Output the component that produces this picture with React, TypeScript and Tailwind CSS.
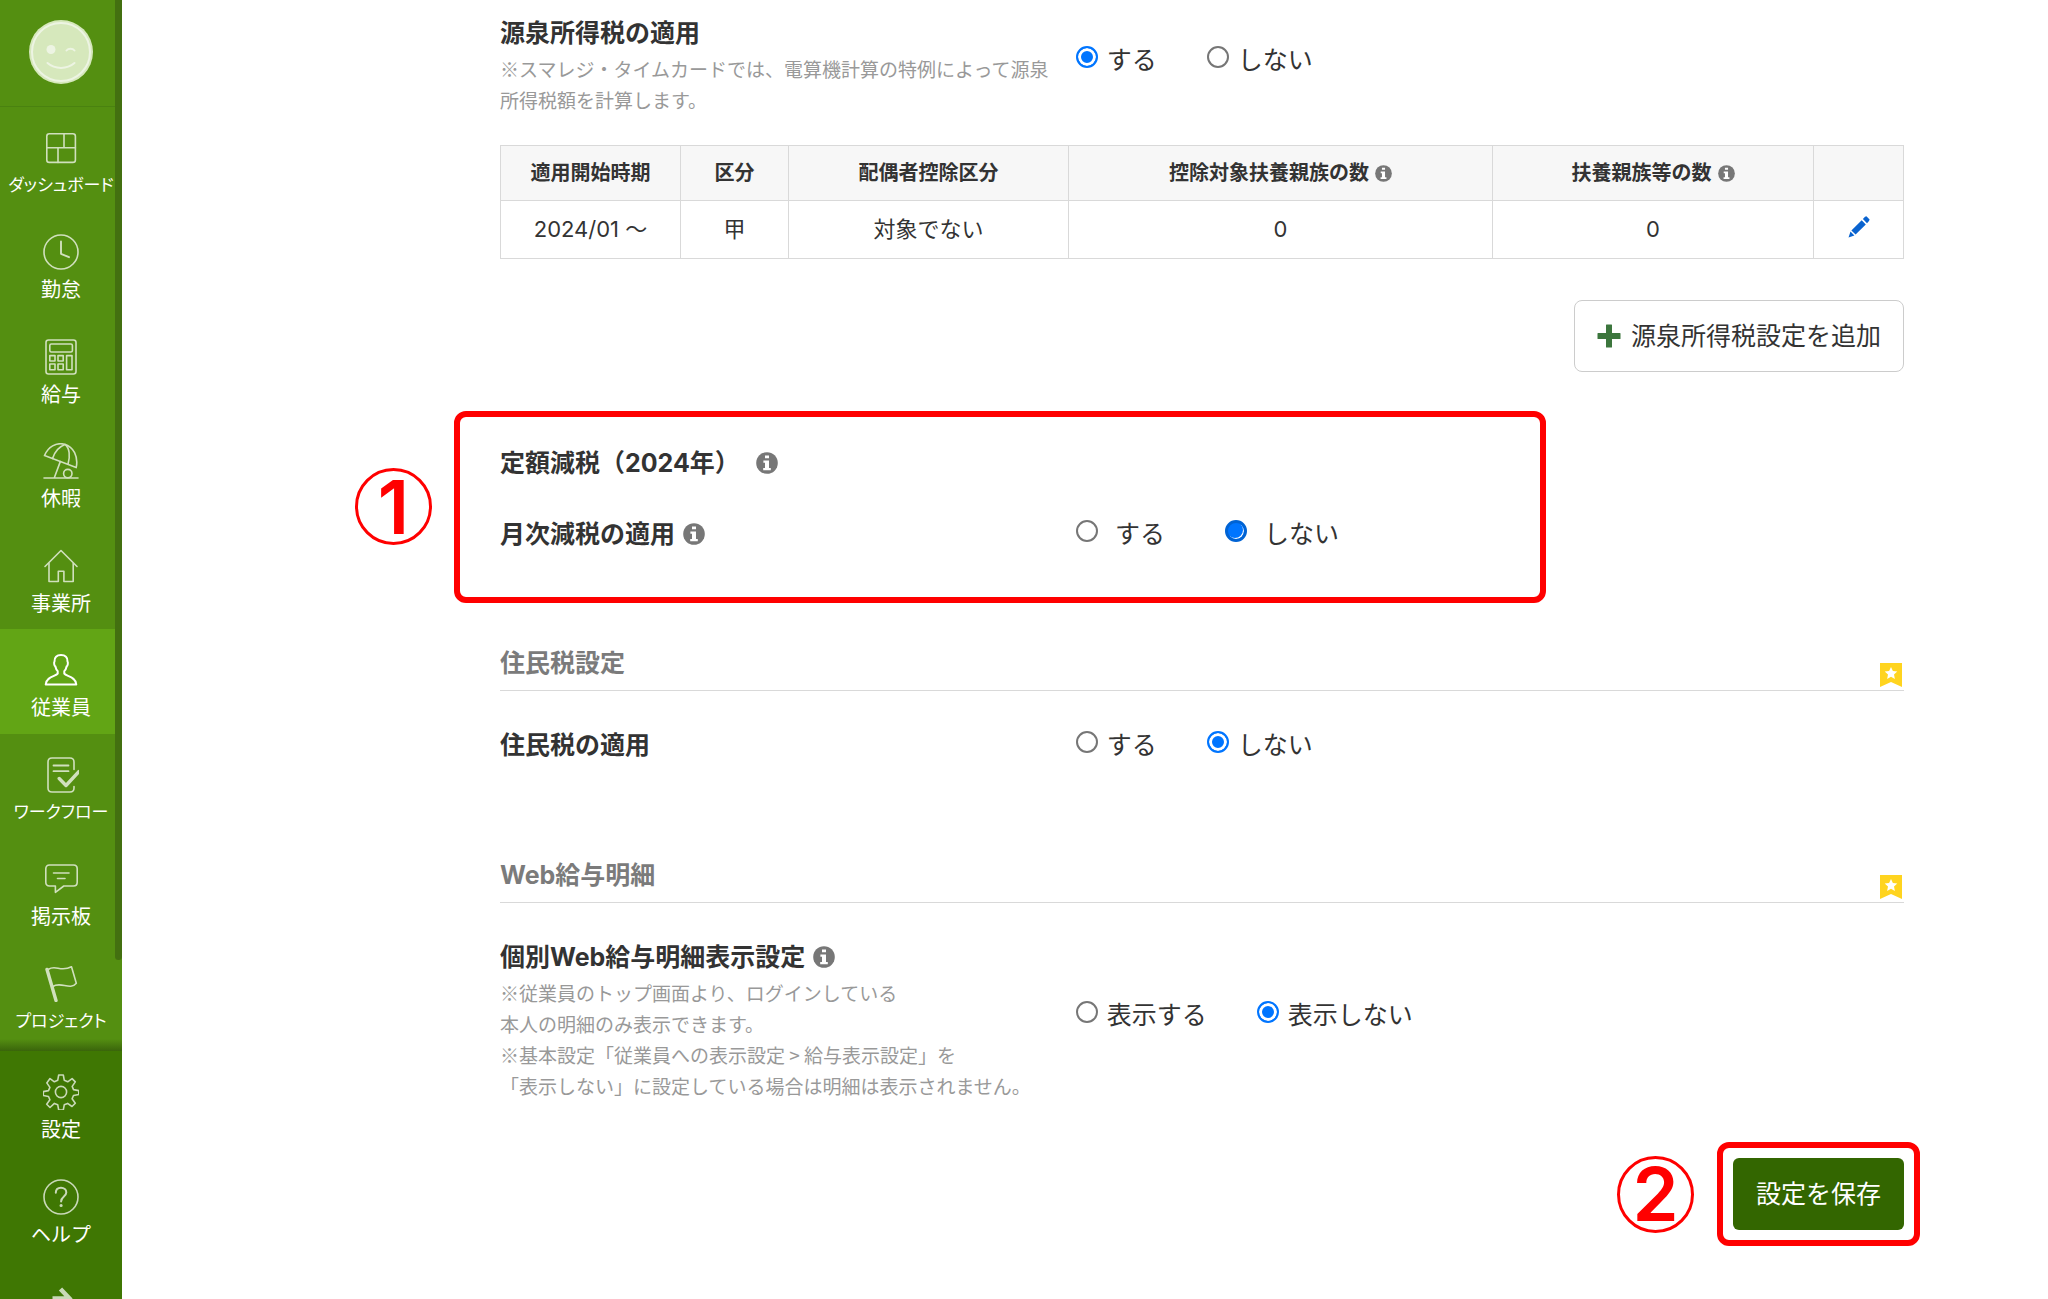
import type { ReactNode } from "react";

const iconProps = {
  viewBox: "0 0 36 36",
  fill: "none",
  stroke: "currentColor",
  strokeWidth: 1.6,
  strokeLinejoin: "round" as const,
  strokeLinecap: "round" as const,
  className: "size-9 shrink-0",
  "aria-hidden": true,
};

const DashboardIcon = () => (
  <svg {...iconProps}>
    <rect x="3.8" y="3.8" width="28.6" height="28.6" rx="2.5" />
    <path d="M3.8 17.8h28.6M21 3.8v14M15 17.8v14.6" />
  </svg>
);

const ClockIcon = () => (
  <svg {...iconProps}>
    <circle cx="18" cy="18" r="17" />
    <path d="M18 7.5v12.3l8 3.4" strokeWidth="1.9" />
  </svg>
);

const CalculatorIcon = () => (
  <svg {...iconProps}>
    <rect x="3" y="1" width="30" height="34" rx="2.5" />
    <rect x="6.8" y="5" width="22.6" height="8" rx="1.5" />
    <rect x="6.8" y="16.6" width="5.2" height="5.4" />
    <rect x="15" y="16.6" width="5.2" height="5.4" />
    <rect x="6.8" y="25" width="5.2" height="5.8" />
    <rect x="15" y="25" width="5.2" height="5.8" />
    <rect x="23.6" y="16.6" width="5.4" height="14.2" />
  </svg>
);

const UmbrellaIcon = () => (
  <svg {...iconProps}>
    <path d="M1.5 12.6C5 4 13 -.8 21.5 1.2c9 2.4 14 12.500 11.700 23.400z" />
    <path d="M9.500 15.500C11.500 9 16.500 3.500 22 1.400c4.600 3.600 5.400 11.600 3 19.800" />
    <path d="M17.300 18.600 11.300 34.800M1 35h34" />
    <circle cx="24.800" cy="30.600" r="4.200" />
  </svg>
);

const HouseIcon = () => (
  <svg {...iconProps}>
    <path d="M2 18.500 18 2.500l16 16" />
    <path d="M6 15.500V33.500h9.300V23.200h5.600v10.300H30.200V15.500" />
  </svg>
);

const PersonIcon = () => (
  <svg {...iconProps} strokeWidth={2}>
    <path d="M18 3c-4.300 0-6.800 2.300-6.500 6.500-.7.900-.4 4.300.9 5 .4 2 1.100 3.400 2.300 4.600v2.600c-2 2.600-11.700 2.800-12 10.800h30.600c-.3-8-10-8.200-12-10.800v-2.600c1.200-1.200 1.900-2.600 2.300-4.600 1.300-.7 1.600-4.100.9-5C24.800 5.300 22.300 3 18 3z" />
  </svg>
);

const WorkflowIcon = () => (
  <svg {...iconProps}>
    <path d="M31 12.500V5c0-2.500-1.500-4-4-4H9C6.500 1 5 2.500 5 5v26c0 2.500 1.500 4 4 4h18c2.500 0 4-1.500 4-4v-1.500" />
    <path d="M10.500 8.500h15M10.500 14.200h15" strokeWidth="1.800" />
    <path d="m16.200 21.500 6.800 7L36 14.500" strokeWidth="3.400" />
  </svg>
);

const BoardIcon = () => (
  <svg {...iconProps}>
    <path d="M6.500 4h24c2.400 0 3.700 1.300 3.700 3.700v13.600c0 2.400-1.300 3.700-3.700 3.700h-9.700l-8.400 6.300V25H6.500c-2.400 0-3.700-1.300-3.700-3.700V7.700C2.800 5.300 4.100 4 6.500 4z" />
    <path d="M10.500 12h15.500M14.500 17.500h7.500" />
  </svg>
);

const FlagIcon = () => (
  <svg {...iconProps}>
    <path d="M4 3.500 13 34.500" strokeWidth="3.400" />
    <path d="M5.500 3.200C13-1.500 17.500 6.500 28.500.8l4.800 16.400C27 25 18 15 9.800 20.500" />
  </svg>
);

const GearIcon = () => (
  <svg {...iconProps}>
    <circle cx="18" cy="18" r="5.600" />
    <path d="M15.700 1h4.600l1 5.300 3.400 1.500 4.400-3.200 3.200 3.300-3.100 4.500 1.300 3.200 5.300 1v3.900l-5.300 1-1.400 3.300 3.200 4.500-3.300 3.200-4.400-3.100-3.300 1.300-1 5.300h-4.600l-1-5.300-3.300-1.300L7 33.500l-3.300-3.200 3.200-4.500-1.400-3.300-5.200-1v-3.900l5.200-1 1.400-3.200-3.100-4.500L7 4.600l4.400 3.200 3.300-1.500z" />
  </svg>
);

const HelpIcon = () => (
  <svg {...iconProps}>
    <circle cx="18" cy="18" r="17" />
    <path d="M12.800 13.800c0-3.300 2.200-5 5.200-5s5.300 1.800 5.300 4.700c0 4-5.200 4.200-5.200 9" strokeWidth="2" />
    <circle cx="18.100" cy="26.500" r=".8" fill="currentColor" />
  </svg>
);

const ArrowIcon = () => (
  <svg {...iconProps}>
    <path d="M9.500 14.500H25M17.500 5l9 9.500-9 9.500" strokeWidth="4.500" strokeLinecap="butt" strokeLinejoin="miter" />
  </svg>
);

const PencilIcon = () => (
  <svg viewBox="0 0 22 22" className="size-[22px] fill-[#0a63cf]" aria-hidden="true">
    <path d="M17 .8 18.400.300 21.600 3.600 21 5 19 7.200 14.900 3zM13.700 4.200 17.800 8.400 7.600 18.600 3.400 14.400zM2.500 15.600 6.400 19.500.5 21.500z" />
  </svg>
);

const PlusIcon = () => (
  <svg viewBox="0 0 24 24" className="size-6 fill-[#3c763d]" aria-hidden="true">
    <path d="M9.500.5h5q.5 0 .5.500v8h8q.5 0 .5.500v5q0 .5-.5.500h-8v8q0 .5-.5.500h-5q-.5 0-.5-.5v-8H1q-.5 0-.5-.5v-5q0-.5.5-.5h8V1q0-.5.5-.5z" />
  </svg>
);

const BookmarkIcon = () => (
  <svg viewBox="0 0 22 24" className="h-6 w-[22px]" aria-hidden="true">
    <path d="M0 0h22v24l-11-5-11 5z" fill="#ffd41f" />
    <path d="m11 4 1.900 4.100 4.400.5-3.300 3 .9 4.400-3.900-2.200L7.100 16l.9-4.400-3.300-3 4.400-.5z" fill="#fff" />
  </svg>
);

const Info = ({ small }: { small?: boolean }) => (
  <svg viewBox="0 0 22 22" className={small ? "size-[17px]" : "size-[22px]"} aria-hidden="true">
    <circle cx="11" cy="11" r="10.800" fill="#777" />
    <path d="M9 3.400h4v2.900H9zM7.400 8.400H13v7.500h1.800v2.300H7.200v-2.300H9v-5.200H7.400z" fill="#fff" />
  </svg>
);

const menu = [
  { label: "ダッシュボード", Icon: DashboardIcon, long: true },
  { label: "勤怠", Icon: ClockIcon },
  { label: "給与", Icon: CalculatorIcon },
  { label: "休暇", Icon: UmbrellaIcon },
  { label: "事業所", Icon: HouseIcon },
  { label: "従業員", Icon: PersonIcon, active: true },
  { label: "ワークフロー", Icon: WorkflowIcon, long: true },
  { label: "掲示板", Icon: BoardIcon },
  { label: "プロジェクト", Icon: FlagIcon, long: true },
];

const Sidebar = () => (
  <aside className="sticky top-0 flex h-screen w-[122px] shrink-0 flex-col overflow-hidden bg-[#548f11] text-xl leading-6 text-white">
    <div className="relative flex min-h-0 flex-1 flex-col pb-1">
      <div className="mr-[7px] flex h-[107px] shrink-0 justify-center border-b border-[#4a8210] pt-5 pl-[7px]">
        <svg viewBox="0 0 64 64" className="size-16" aria-hidden="true">
          <circle cx="32" cy="32" r="32" fill="#d6e8bc" />
          <g fill="none" stroke="#edf4e3" strokeWidth="2" strokeLinecap="round">
            <circle cx="32" cy="32" r="29" />
            <path d="M18.500 43c7.500 6.500 19.500 6.500 27 0M37.500 30.500c2-2.500 6-2.500 8 0" />
          </g>
          <circle cx="22" cy="29.500" r="4.500" fill="#edf4e3" />
        </svg>
      </div>
      <nav className="flex min-h-0 flex-1 flex-col">
        {menu.map(({ label, Icon, active, long }) => (
          <a
            key={label}
            href="#"
            className={
              active
                ? "mr-[7px] flex flex-1 flex-col items-center bg-[#62a515] pt-[23px] pl-[7px]"
                : "mr-[7px] flex flex-1 flex-col items-center pt-[23px] pl-[7px]"
            }
          >
            <span className={active ? "text-white" : "text-[#d0e0bd]"}>
              <Icon />
            </span>
            <span
              className={
                long
                  ? "mt-[7px] text-[17px] leading-6 whitespace-nowrap [font-feature-settings:'palt']"
                  : "mt-2 whitespace-nowrap"
              }
            >
              {label}
            </span>
          </a>
        ))}
      </nav>
      {/* scroll thumb and fade over the menu */}
      <div className="absolute top-0 right-0 h-[960px] w-[7px] rounded-b bg-[#437010]" />
      <div className="absolute inset-x-0 bottom-0 h-3 bg-linear-to-b from-transparent to-[#3a650b]" />
    </div>

    <div className="flex h-[248px] shrink-0 flex-col overflow-hidden bg-[#3f7703]">
      <a href="#" className="flex h-[105px] shrink-0 flex-col items-center pt-[23px]">
        <span className="text-[#c9d9b8]"><GearIcon /></span>
        <span className="mt-2">設定</span>
      </a>
      <a href="#" className="flex h-[105px] shrink-0 flex-col items-center pt-[23px]">
        <span className="text-[#c9d9b8]"><HelpIcon /></span>
        <span className="mt-2">ヘルプ</span>
      </a>
      <button type="button" aria-label="メニューを開く" className="flex h-[105px] shrink-0 flex-col items-center pt-[23px] text-[#c9d9b8]">
        <ArrowIcon />
      </button>
    </div>
  </aside>
);

const RadioGroup = ({
  name,
  label,
  options,
  selected,
  wide,
}: {
  name: string;
  label: string;
  options: string[];
  selected: number;
  wide?: boolean;
}) => (
  <div role="radiogroup" aria-label={label} className={wide ? "flex gap-[60px]" : "flex gap-[50px]"}>
    {options.map((option, i) => (
      <label key={option} className={wide ? "flex items-center gap-[17px]" : "flex items-center gap-[9px]"}>
        <input
          type="radio"
          name={name}
          defaultChecked={i === selected}
          className={
            wide
              ? "mb-1.5 size-[22px] appearance-none rounded-full border-2 border-[#767676] bg-white checked:border-[3px] checked:border-[#0063d4] checked:bg-[#0075ff] checked:shadow-[inset_-1px_-1px_0_0_#fff]"
              : "mb-1.5 size-[22px] appearance-none rounded-full border-2 border-[#767676] bg-white checked:border-[#0075ff] checked:bg-[#0075ff] checked:shadow-[inset_0_0_0_3px_#fff]"
          }
        />
        {option}
      </label>
    ))}
  </div>
);

const SectionTitle = ({ children }: { children: ReactNode }) => (
  <div className="flex items-end justify-between border-b border-[#d9d9d9] pb-[7px] font-bold text-[#7b7b7b]">
    <h2>{children}</h2>
    <span className="-mb-1 pr-0.5"><BookmarkIcon /></span>
  </div>
);

const Note = ({ children }: { children: ReactNode }) => (
  <p className="pb-0.5 font-['Noto_Sans_CJK_JP',sans-serif] text-[19px] leading-[31px] text-[#999]">{children}</p>
);

const Step = ({ children }: { children: ReactNode }) => (
  <span className="flex size-[77px] items-center justify-center rounded-full border-[3px] border-[#f00] text-[74px] leading-none font-semibold text-[#f00]">
    {children}
  </span>
);

const th = "border border-[#d9d9d9] font-bold";
const td = "border border-[#d9d9d9] pb-0.5";

export default function App() {
  return (
    <div className="flex min-h-screen bg-white font-[Inter,'Noto_Sans_CJK_JP',sans-serif] text-[25px] leading-10 text-[#333]">
      <Sidebar />

      <main className="min-w-0 flex-1 pt-[13px] pr-36 pl-[378px]">
        {/* Withholding tax */}
        <section>
          <div className="flex items-center">
            <div className="w-[41%] shrink-0">
              <h3 className="font-bold">源泉所得税の適用</h3>
              <Note>
                ※スマレジ・タイムカードでは、電算機計算の特例によって源泉
                <br />
                所得税額を計算します。
              </Note>
            </div>
            <div className="pb-2.5">
              <RadioGroup name="withholding" label="源泉所得税の適用" options={["する", "しない"]} selected={0} />
            </div>
          </div>

          <table className="mt-7 w-full table-fixed border-collapse text-center text-[22px] leading-8">
            <thead>
              <tr className="h-[55px] bg-[#f7f7f7] text-xl">
                <th className={`${th} w-[180px]`}>適用開始時期</th>
                <th className={`${th} w-[108px]`}>区分</th>
                <th className={`${th} w-[280px]`}>配偶者控除区分</th>
                <th className={th}>
                  <span className="inline-flex items-center gap-1.5">控除対象扶養親族の数<Info small /></span>
                </th>
                <th className={`${th} w-[321px]`}>
                  <span className="inline-flex items-center gap-1.5">扶養親族等の数<Info small /></span>
                </th>
                <th className={`${th} w-[90px]`}></th>
              </tr>
            </thead>
            <tbody>
              <tr className="h-[58px]">
                <td className={td}>2024/01 〜</td>
                <td className={td}>甲</td>
                <td className={td}>対象でない</td>
                <td className={td}>0</td>
                <td className={td}>0</td>
                <td className={td}>
                  <button type="button" aria-label="編集" className="flex w-full justify-center pb-1">
                    <PencilIcon />
                  </button>
                </td>
              </tr>
            </tbody>
          </table>

          <div className="mt-[41px] flex justify-end">
            <button type="button" className="flex h-[72px] items-center gap-2.5 rounded-lg border border-[#ccc] px-[22px]">
              <PlusIcon />
              源泉所得税設定を追加
            </button>
          </div>
        </section>

        {/* Fixed-amount tax cut */}
        <section className="relative mt-[39px] -ml-[46px] w-[1092px] rounded-xl border-6 border-[#f00] pt-[26px] pb-[43px] pl-10">
          <div className="absolute top-[51px] -left-[105px]">
            <Step>1</Step>
          </div>
          <h3 className="flex items-center gap-4 font-bold">
            定額減税（2024年）
            <Info />
          </h3>
          <div className="mt-[31px] flex items-center">
            <h3 className="flex w-[576px] shrink-0 items-center gap-2 font-bold">
              月次減税の適用
              <Info />
            </h3>
            <RadioGroup name="monthly" label="月次減税の適用" options={["する", "しない"]} selected={1} wide />
          </div>
        </section>

        {/* Resident tax */}
        <section className="mt-10">
          <SectionTitle>住民税設定</SectionTitle>
          <div className="mt-[34px] flex items-center">
            <h3 className="w-[41%] shrink-0 font-bold">住民税の適用</h3>
            <RadioGroup name="resident" label="住民税の適用" options={["する", "しない"]} selected={1} />
          </div>
        </section>

        {/* Web payslip */}
        <section className="mt-[90px]">
          <SectionTitle>Web給与明細</SectionTitle>
          <div className="mt-[34px] flex items-center">
            <div className="w-[41%] shrink-0">
              <h3 className="flex items-center gap-2 font-bold">
                個別Web給与明細表示設定
                <Info />
              </h3>
              <Note>
                ※従業員のトップ画面より、ログインしている
                <br />
                本人の明細のみ表示できます。
                <br />
                ※基本設定「従業員への表示設定 &gt; 給与表示設定」を
                <br />
                「表示しない」に設定している場合は明細は表示されません。
              </Note>
            </div>
            <div className="pb-2.5">
              <RadioGroup name="payslip" label="個別Web給与明細表示設定" options={["表示する", "表示しない"]} selected={1} />
            </div>
          </div>
        </section>

        <div className="mt-[39px] -mr-4 flex items-center justify-end gap-[23px]">
          <Step>2</Step>
          <div className="rounded-xl border-6 border-[#f00] p-2.5">
            <button type="button" className="block h-[72px] rounded-md bg-[#360] px-[23px] text-white">
              設定を保存
            </button>
          </div>
        </div>
      </main>
    </div>
  );
}
